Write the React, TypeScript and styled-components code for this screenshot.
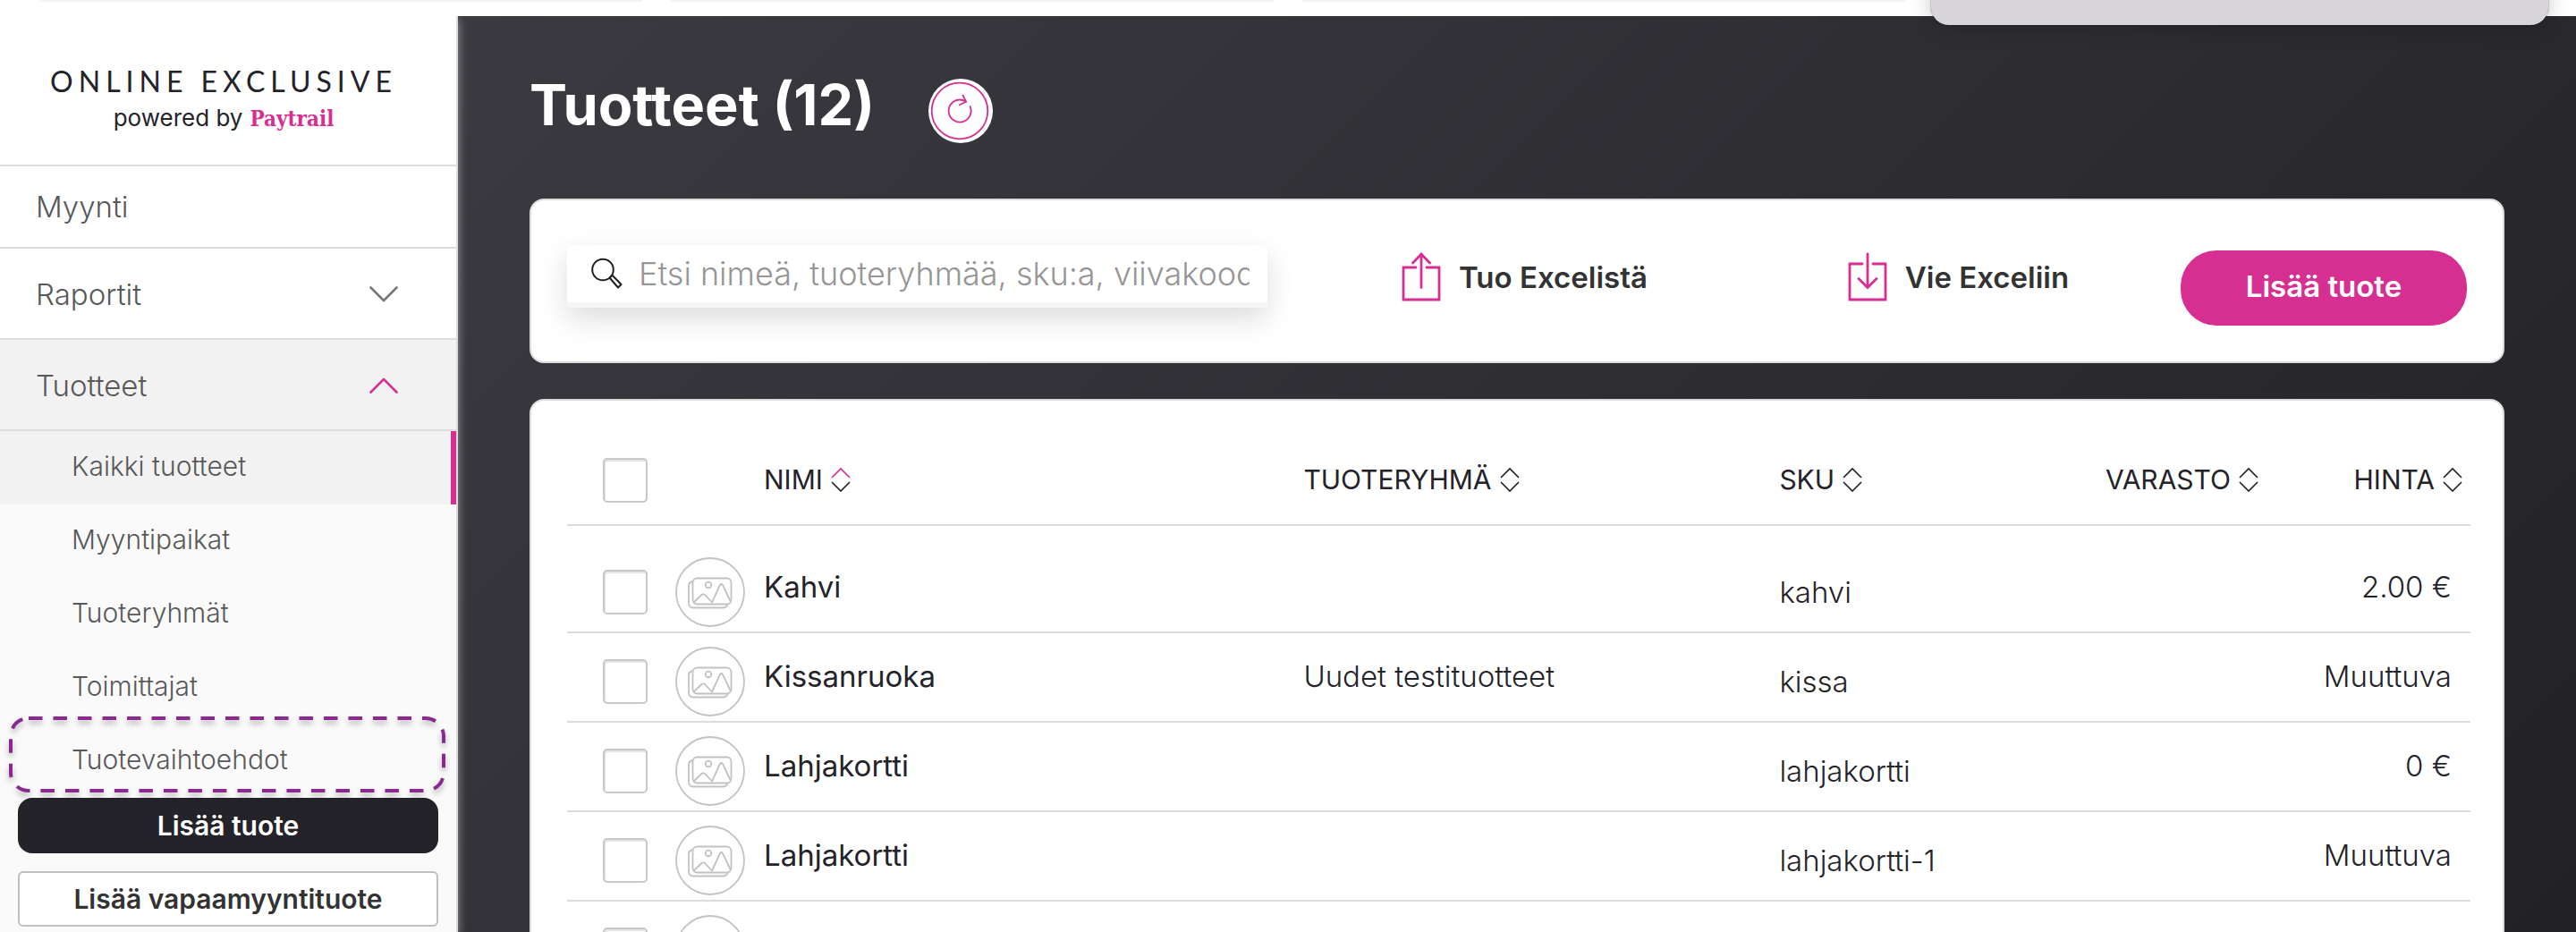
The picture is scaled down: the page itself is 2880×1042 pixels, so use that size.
import React from "react";
import styled, { createGlobalStyle } from "styled-components";

const pink = "#d62e91";
const line = "#dcdcdc";
const ink = "#242329";

const GlobalStyle = createGlobalStyle`
  *, *::before, *::after { box-sizing: border-box; }
  html, body { margin: 0; }
  body {
    font-family: Inter, "Liberation Sans", sans-serif;
    font-size: 30px;
    color: ${ink};
    overflow: hidden;
  }
  button, input { font: inherit; color: inherit; }
  button { cursor: pointer; }
  svg { display: block; flex: none; fill: none; }
`;

const Shell = styled.div`
  display: grid;
  grid-template: 18px minmax(0, 1fr) / 512px minmax(0, 1fr);
  height: 100vh;
  overflow: hidden;
  background: #fff;
`;

const TabStrip = styled.div`
  grid-column: 1 / -1;
  display: grid;
  grid-template-columns: repeat(4, 1fr);
  gap: 32px;
  padding: 0 44px;
`;

const TabEdge = styled.div`
  height: 2px;
  background: #f2f2f2;
  border-radius: 0 0 6px 6px;
`;

const Notification = styled.div`
  position: absolute;
  top: -60px;
  right: 31px;
  z-index: 3;
  width: 690px;
  height: 88px;
  border-radius: 20px;
  background: #d7d5d7;
  box-shadow: 0 0 2px rgba(0, 0, 0, 0.5), 0 4px 24px rgba(0, 0, 0, 0.2);
`;

/* Sidebar */

const Sidebar = styled.aside`
  position: relative;
  z-index: 1;
  display: flex;
  flex-direction: column;
  border-right: 2px solid ${line};
  background: #fafafa;
  box-shadow: 0 4px 10px rgba(255, 255, 255, 0.5);
`;

const Logo = styled.a`
  display: flex;
  flex-direction: column;
  align-items: center;
  gap: 8px;
  height: 168px;
  padding: 54px 10px 0 0;
  border-bottom: 2px solid ${line};
  background: #fff;
  color: ${ink};
  text-decoration: none;
`;

const LogoName = styled.span`
  font-family: Lato, sans-serif;
  font-size: 32px;
  line-height: 38px;
  letter-spacing: 6px;
`;

const LogoTag = styled.span`
  font-size: 26px;
  line-height: 28px;
`;

const LogoBrand = styled.strong`
  margin-left: 8px;
  font-family: "DejaVu Serif Condensed", "DejaVu Serif", serif;
  font-size: 24px;
  color: ${pink};
`;

const MenuButton = styled.button<{ $short?: boolean; $open?: boolean }>`
  display: flex;
  align-items: center;
  justify-content: space-between;
  width: 100%;
  height: ${(p) => (p.$short ? 92 : 102)}px;
  padding: ${(p) => (p.$short ? 0 : 2)}px 65px 0 40px;
  border: 0;
  border-bottom: 2px solid ${line};
  background: ${(p) => (p.$open ? "#f2f2f2" : "#fff")};
  color: #58585a;
  font-size: 33px;
  font-weight: 300;
`;

const SubMenu = styled.ul`
  margin: 0;
  padding: 0;
  list-style: none;
`;

const SubItem = styled.li`
  position: relative;
`;

const SubLink = styled.a<{ $active?: boolean }>`
  display: flex;
  align-items: center;
  height: 82px;
  padding: 0 0 4px 80px;
  border-right: 6px solid ${(p) => (p.$active ? pink : "transparent")};
  background: ${(p) => (p.$active ? "#f2f2f2" : "transparent")};
  color: #58585a;
  font-size: 30px;
  font-weight: 300;
  text-decoration: none;
`;

const Highlight = styled.svg`
  position: absolute;
  top: -10px;
  left: 8px;
  overflow: visible;
  filter: drop-shadow(0 4px 3px rgba(0, 0, 0, 0.3));
  pointer-events: none;
`;

const SideActions = styled.div`
  display: grid;
  gap: 20px;
  padding: 0 20px 6px;
`;

const SideButton = styled.button<{ $dark?: boolean }>`
  height: 62px;
  border: 2px solid ${(p) => (p.$dark ? ink : "#bfbfbf")};
  border-radius: ${(p) => (p.$dark ? 16 : 6)}px;
  background: ${(p) => (p.$dark ? ink : "#fff")};
  color: ${(p) => (p.$dark ? "#fff" : "#333")};
  font-size: 30px;
  font-weight: 600;
`;

/* Main area */

const Main = styled.main`
  padding: 70px 80px 0;
  overflow: hidden;
  background: linear-gradient(135deg, #3b3a40 0%, #222126 100%);
`;

const PageHeader = styled.header`
  display: flex;
  align-items: flex-start;
  gap: 60px;
  margin-bottom: 62px;
`;

const Title = styled.h1`
  margin: 0;
  font-size: 63px;
  line-height: 58px;
  font-weight: 700;
  color: #fff;
`;

const RoundButton = styled.button`
  padding: 0;
  border: 0;
  border-radius: 50%;
  background: #fff;
`;

const Panel = styled.section`
  margin-bottom: 40px;
  border: 2px solid ${line};
  border-radius: 16px;
  background: #fff;
`;

const Toolbar = styled(Panel)`
  display: grid;
  grid-template-columns: 28fr 15fr 21fr;
  align-items: start;
  padding: 50px 36px 40px 40px;
`;

const Search = styled.label`
  display: flex;
  align-items: center;
  gap: 18px;
  height: 70px;
  margin-right: 148px;
  padding: 0 20px 0 26px;
  border-bottom: 6px solid #f5f5f5;
  border-radius: 8px 8px 0 0;
  background: #fff;
  box-shadow: 0 12px 32px rgba(0, 0, 0, 0.14);
`;

const SearchInput = styled.input`
  flex: 1;
  min-width: 0;
  padding: 0;
  border: 0;
  outline: 0;
  background: none;
  font-size: 36px;
  font-weight: 300;
  &::placeholder { color: #969696; opacity: 1; }
`;

const ExcelButton = styled.button`
  display: flex;
  align-items: center;
  justify-self: start;
  gap: 20px;
  height: 72px;
  padding: 0 0 0 2px;
  border: 0;
  background: none;
  color: #333;
  font-size: 33px;
  font-weight: 600;
`;

const ToolbarEnd = styled.div`
  display: flex;
  justify-content: space-between;
`;

const AddButton = styled.button`
  width: 320px;
  height: 84px;
  margin: 6px 4px 0 0;
  padding: 0 0 4px;
  border: 0;
  border-radius: 40px;
  background: ${pink};
  color: #fff;
  font-size: 33px;
  font-weight: 600;
`;

const TablePanel = styled(Panel)`
  padding: 40px 36px 0 40px;
`;

const Table = styled.table`
  width: 100%;
  table-layout: fixed;
  border-collapse: separate;
  border-spacing: 0;
`;

const Col = styled.col<{ $w?: string }>`
  width: ${(p) => p.$w ?? "auto"};
`;

const HeadCell = styled.th<{ $end?: boolean }>`
  height: 100px;
  padding: 0 ${(p) => (p.$end ? 9 : 0)}px 0 0;
  border-bottom: 2px solid ${line};
  text-align: ${(p) => (p.$end ? "right" : "left")};
  font-weight: 400;
`;

const SortButton = styled.button`
  display: inline-flex;
  align-items: center;
  gap: 9px;
  padding: 0 0 2px;
  border: 0;
  background: none;
  font-size: 30px;
`;

const Row = styled.tr`
  &:first-child td { height: 120px; border-top: 20px solid transparent; }
`;

const Cell = styled.td<{ $low?: boolean; $end?: boolean; $strong?: boolean }>`
  height: 100px;
  padding: ${(p) => (p.$low ? 10 : 0)}px ${(p) => (p.$end ? 21 : 0)}px ${(p) => (p.$low ? 0 : 2)}px 0;
  border-bottom: 2px solid ${line};
  text-align: ${(p) => (p.$end ? "right" : "left")};
  font-size: 33px;
  font-weight: ${(p) => (p.$strong ? 400 : 300)};
`;

const Check = styled.input`
  display: block;
  appearance: none;
  width: 50px;
  height: 50px;
  margin: 0 0 0 40px;
  border: 2px solid #c8c8c8;
  border-radius: 5px;
  background: #fff;
  box-shadow: inset 1px 2px 0 #e4e4e4;
`;

const Chevron = ({ up }: { up?: boolean }) => (
  <svg width="32" height="18" viewBox="0 0 32 18" stroke={up ? pink : "#77777a"} strokeWidth="2.6" strokeLinecap="round" strokeLinejoin="round">
    <path d={up ? "M1.5 16.500 16 2 30.500 16.500" : "M1.5 1.500 16 16 30.500 1.500"} />
  </svg>
);

const SortIcon = ({ active }: { active?: boolean }) => (
  <svg width="22" height="28" viewBox="0 0 22 28" strokeWidth="1.7">
    <path d="M1 12 11 2 21 12" stroke={active ? pink : ink} />
    <path d="M1 17 11 27 21 17" stroke={ink} />
  </svg>
);

const RefreshIcon = () => (
  <svg width="72" height="72" viewBox="0 0 72 72" stroke={pink} strokeWidth="1.8" strokeLinecap="round" strokeLinejoin="round">
    <circle cx="35" cy="36" r="31.3" />
    <path d="M46.6 31A12.5 12.5 0 1 1 35 23.5C38 23.5 40 24.3 42 25.7" />
    <path d="M38.5 18.5 42 25.7 34.8 29.2" />
  </svg>
);

const SearchIcon = () => (
  <svg width="36" height="36" viewBox="0 0 36 36" stroke="#1f1e24" strokeWidth="2" strokeLinejoin="round">
    <circle cx="14" cy="13.500" r="11.800" />
    <path d="M21.500 22.500 24.500 19.800 34.500 30 31 33.500Z" />
  </svg>
);

const ImportIcon = () => (
  <svg width="44" height="56" viewBox="0 0 44 56" stroke={pink} strokeWidth="2.8" strokeLinecap="round">
    <path d="M16 17H2V53H42V17H28" />
    <path d="M22 39.500V2M12.500 12 22 2 31.500 12" />
  </svg>
);

const ExportIcon = () => (
  <svg width="44" height="56" viewBox="0 0 44 56" stroke={pink} strokeWidth="2.8" strokeLinecap="round">
    <path d="M16 13H2V53H42V13H28" />
    <path d="M22 2V39.500M12 29.500 22 39.500 32 29.500" />
  </svg>
);

const PictureIcon = () => (
  <svg width="80" height="78" viewBox="0 0 80 78" stroke="#c2c2c2" strokeWidth="1.8" strokeLinejoin="round">
    <circle cx="40" cy="39" r="38" />
    <rect x="20.500" y="23.500" width="43" height="29" rx="5" />
    <path d="M20.500 27Q16 28 16 32V51Q16 56.500 21 56.500H54Q58.500 56.500 59.500 52.500" />
    <circle cx="38" cy="31" r="3.300" />
    <path d="M21.500 50.500 30.500 42Q32.500 40.500 34.500 42.500L42 50.500 51 31Q52.500 29 54 31L62.500 49" />
  </svg>
);

const products = [
  { name: "Kahvi", group: "", sku: "kahvi", price: "2.00 €" },
  { name: "Kissanruoka", group: "Uudet testituotteet", sku: "kissa", price: "Muuttuva" },
  { name: "Lahjakortti", group: "", sku: "lahjakortti", price: "0 €" },
  { name: "Lahjakortti", group: "", sku: "lahjakortti-1", price: "Muuttuva" },
  { name: "", group: "", sku: "", price: "" },
];

const subItems = ["Kaikki tuotteet", "Myyntipaikat", "Tuoteryhmät", "Toimittajat", "Tuotevaihtoehdot"];

const columns = [
  { label: "NIMI", active: true },
  { label: "TUOTERYHMÄ" },
  { label: "SKU" },
  { label: "VARASTO", end: true },
  { label: "HINTA", end: true },
];

export default function App() {
  return (
    <Shell>
      <GlobalStyle />
      <TabStrip>
        <TabEdge />
        <TabEdge />
        <TabEdge />
        <TabEdge />
      </TabStrip>
      <Notification />

      <Sidebar>
        <Logo href="#">
          <LogoName>ONLINE EXCLUSIVE</LogoName>
          <LogoTag>
            powered by
            <LogoBrand>Paytrail</LogoBrand>
          </LogoTag>
        </Logo>
        <nav>
          <MenuButton $short>Myynti</MenuButton>
          <MenuButton>
            Raportit
            <Chevron />
          </MenuButton>
          <MenuButton $open>
            Tuotteet
            <Chevron up />
          </MenuButton>
          <SubMenu>
            {subItems.map((label, i) => (
              <SubItem key={label}>
                <SubLink href="#" $active={i === 0}>{label}</SubLink>
                {i === 4 && (
                  <Highlight width="492" height="88" stroke="#8a2a90" strokeWidth="4" strokeDasharray="15.500 12">
                    <rect x="4" y="3" width="484" height="81" rx="20" />
                  </Highlight>
                )}
              </SubItem>
            ))}
          </SubMenu>
        </nav>
        <SideActions>
          <SideButton $dark>Lisää tuote</SideButton>
          <SideButton>Lisää vapaamyyntituote</SideButton>
        </SideActions>
      </Sidebar>

      <Main>
        <PageHeader>
          <Title>Tuotteet (12)</Title>
          <RoundButton aria-label="Päivitä">
            <RefreshIcon />
          </RoundButton>
        </PageHeader>

        <Toolbar>
          <Search>
            <SearchIcon />
            <SearchInput aria-label="Etsi" placeholder="Etsi nimeä, tuoteryhmää, sku:a, viivakoodia" />
          </Search>
          <ExcelButton>
            <ImportIcon />
            Tuo Excelistä
          </ExcelButton>
          <ToolbarEnd>
            <ExcelButton>
              <ExportIcon />
              Vie Exceliin
            </ExcelButton>
            <AddButton>Lisää tuote</AddButton>
          </ToolbarEnd>
        </Toolbar>

        <TablePanel>
          <Table>
            <colgroup>
              <Col $w="120px" />
              <Col $w="100px" />
              <Col />
              <Col $w="25%" />
              <Col $w="13%" />
              <Col $w="268px" />
              <Col $w="228px" />
            </colgroup>
            <thead>
              <tr>
                <HeadCell>
                  <Check type="checkbox" aria-label="Valitse kaikki" />
                </HeadCell>
                <HeadCell />
                {columns.map((c) => (
                  <HeadCell key={c.label} $end={c.end}>
                    <SortButton>
                      {c.label}
                      <SortIcon active={c.active} />
                    </SortButton>
                  </HeadCell>
                ))}
              </tr>
            </thead>
            <tbody>
              {products.map((p, i) => (
                <Row key={i}>
                  <Cell $low>
                    <Check type="checkbox" aria-label={"Valitse " + p.name} />
                  </Cell>
                  <Cell $low>
                    <PictureIcon />
                  </Cell>
                  <Cell $strong>{p.name}</Cell>
                  <Cell>{p.group}</Cell>
                  <Cell $low>{p.sku}</Cell>
                  <Cell />
                  <Cell $end>{p.price}</Cell>
                </Row>
              ))}
            </tbody>
          </Table>
        </TablePanel>
      </Main>
    </Shell>
  );
}
